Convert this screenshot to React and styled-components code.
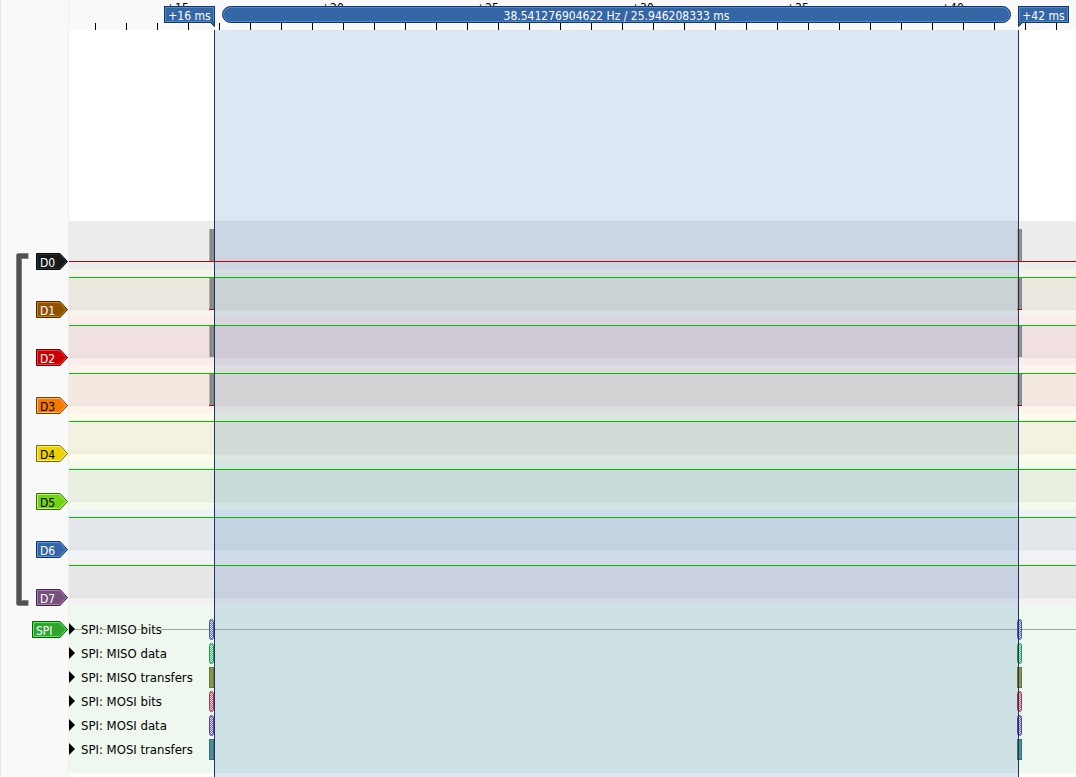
import React from "react";
import styled, { createGlobalStyle } from "styled-components";

const GlobalStyle = createGlobalStyle`
  *, *::before, *::after { box-sizing: border-box; }
  body {
    margin: 0;
    background: #ffffff;
    color: #000000;
    font-family: "DejaVu Sans Condensed", "DejaVu Sans", Tahoma, sans-serif;
    font-size: 12px;
    line-height: 16px;
  }
  button { font: inherit; color: inherit; margin: 0; padding: 0; border: 0; background: none; }
`;

const Page = styled.main`
  display: flex;
  min-height: 100vh;
  border-left: 1px solid #e4e4e4;
`;

const Gutter = styled.aside`
  display: flex;
  flex: none;
  width: 68px;
  padding-top: 253px;
  padding-left: 15px;
  background: #f9f9f9;
  border-right: 1px solid #eeeeee;
`;

const Bracket = styled.svg`
  display: block;
  flex: none;
`;

const Tags = styled.div`
  display: flex;
  flex: 1;
  flex-direction: column;
  align-items: flex-end;
  gap: 31px;
`;

const DecoderTagSlot = styled.div`
  display: flex;
  margin-top: -16px;
`;

const TagButton = styled.button`
  display: grid;
  color: ${(p) => p.$ink};
  text-align: left;
  & > * { grid-area: 1 / 1; }
`;

const TagText = styled.span`
  padding: 3px 0 0 4px;
  line-height: 14px;
`;

const View = styled.section`
  position: relative;
  display: flex;
  flex: 1;
  flex-direction: column;
  min-width: 0;
  overflow: hidden;
`;

const Ruler = styled.header`
  position: relative;
  flex: none;
  height: 30px;
  overflow: hidden;
  background: #f9f9f9;
`;

const Ticks = styled.div`
  height: 30px;
  padding: 23px 0 0 26px;
  display: flex;
  gap: 30px;
`;

const Tick = styled.i`
  flex: none;
  width: 1px;
  height: 7px;
  background: #000000;
`;

const Scale = styled.div`
  position: absolute;
  top: 0;
  left: 94px;
  display: flex;
`;

const ScaleLabel = styled.span`
  flex: none;
  width: 155px;
  padding-left: 3px;
`;

const Markers = styled.div`
  position: absolute;
  inset: 6px 7px auto 95px;
  display: flex;
  gap: 7px;
`;

const Flag = styled.div`
  position: relative;
  flex: none;
  width: 51px;
  height: 17px;
  padding-top: 1px;
  border: 1px solid #17375f;
  box-shadow: inset 0 0 0 1px #4a8ad8;
  background: #3465a4;
  color: #ffffff;
  text-align: center;
  line-height: 17px;
`;

const Tail = styled.svg`
  position: absolute;
  top: 14px;
  ${(p) => (p.$side === "right" ? "right: -1px;" : "left: -1px;")}
`;

const Interval = styled.div`
  flex: 1;
  min-width: 0;
  height: 17px;
  padding-top: 1px;
  border: 1px solid #17375f;
  border-radius: 9px;
  box-shadow: inset 0 0 0 1px #4a8ad8;
  background: #3465a4;
  color: #ffffff;
  text-align: center;
  white-space: nowrap;
  line-height: 17px;
`;

const Plot = styled.div`
  position: relative;
  flex: 1;
  padding-top: 191px;
`;

const Selection = styled.div`
  position: absolute;
  inset: 0 58px 0 146px;
  background: rgba(114, 159, 207, 0.25);
`;

const Traces = styled.div`
  position: relative;
`;

const Cursors = styled.div`
  position: absolute;
  inset: 0 57px 0 145px;
  border: solid #17375f;
  border-width: 0 1px;
  pointer-events: none;
`;

const Channel = styled.div`
  height: 48px;
  padding: 8px 0 7px;
  background: ${(p) => p.$tint}14;
`;

const Wave = styled.div`
  display: flex;
  height: 33px;
  justify-content: space-between;
  padding: 0 54px 0 140px;
  border: solid transparent;
  border-width: ${(p) => (p.$high ? "1px 0" : "0 0 1px")};
  ${(p) =>
    p.$high
      ? "background: rgba(0, 0, 0, 0.043); border-top-color: #00c000; border-bottom-color: rgba(0, 0, 0, 0.03);"
      : "border-bottom-color: #c00000;"}
`;

const Burst = styled.i`
  width: 5px;
  height: ${(p) => (p.$floor ? "32px" : "100%")};
  background: linear-gradient(90deg, #b4b4b2 0 1px, #858585 1px 3px, #959595 3px 4px, #858585 4px);
  border-bottom: ${(p) => (p.$floor ? "1px solid #c00000" : "0")};
`;

const Decoder = styled.div`
  padding: 12px 0;
  background: rgba(47, 165, 47, 0.08);
`;

const DecoderRow = styled.div`
  display: flex;
  align-items: center;
  height: 24px;
  padding-right: 54px;
  background: ${(p) => (p.$axis ? "linear-gradient(#9aa89c, #9aa89c) 0 12px / 100% 1px no-repeat" : "none")};
`;

const RowToggle = styled.button`
  display: flex;
  align-items: center;
  gap: 6px;
  width: 140px;
  font-size: 13px;
  line-height: 18px;
  text-align: left;
  white-space: nowrap;
  text-shadow: 1px 0 #edf7ee, -1px 0 #edf7ee, 0 1px #edf7ee, 0 -1px #edf7ee;
`;

const RowName = styled.span`
  padding-top: 2px;
`;

const Spacer = styled.span`
  flex: 1;
`;

const Annotation = styled.i`
  width: 5px;
  height: 21px;
  border: 1px solid ${(p) => p.$edge};
  border-radius: ${(p) => (p.$square ? "0" : "3px")};
  background: ${(p) =>
    p.$square
      ? p.$tint
      : `repeating-conic-gradient(${p.$tint} 0 25%, color-mix(in srgb, ${p.$tint} 25%, white) 0 50%) 0 0 / 2px 2px`};
`;

const channels = [
  { name: "D0", ink: "#fff", color: "#16191a", light: "#2e3436", edge: "#060808", burst: true },
  { name: "D1", ink: "#fff", color: "#8f5202", light: "#dc7e03", edge: "#472901", tint: "#8f6c02", high: true, burst: true, floor: true },
  { name: "D2", ink: "#fff", color: "#cc0000", light: "#ff3838", edge: "#660000", high: true, burst: true },
  { name: "D3", ink: "#000", color: "#f57900", light: "#ffb568", edge: "#7a3c00", high: true, burst: true, floor: true },
  { name: "D4", ink: "#000", color: "#edd400", light: "#fff06a", edge: "#766a00", high: true },
  { name: "D5", ink: "#000", color: "#73d216", light: "#abff5b", edge: "#39690b", high: true },
  { name: "D6", ink: "#fff", color: "#3465a4", light: "#4f9bfc", edge: "#1a3252", high: true },
  { name: "D7", ink: "#fff", color: "#75507b", light: "#b37bbd", edge: "#3a283d", high: true },
];

const decoderRows = [
  { name: "SPI: MISO bits", edge: "#4a5c9c", tint: "#5f78d0" },
  { name: "SPI: MISO data", edge: "#2f9055", tint: "#3fc074" },
  { name: "SPI: MISO transfers", edge: "#6c7838", tint: "#8a9550", square: true },
  { name: "SPI: MOSI bits", edge: "#a03a54", tint: "#e0506f" },
  { name: "SPI: MOSI data", edge: "#55459a", tint: "#7960d4" },
  { name: "SPI: MOSI transfers", edge: "#38707a", tint: "#528c96", square: true },
];

const scale = ["+15", "+20", "+25", "+30", "+35", "+40"];

function Tag({ name, width = 32, ink, color, light, edge }) {
  const w = width;
  return (
    <TagButton type="button" $ink={ink}>
      <svg width={w} height="17" viewBox={`0 0 ${w} 17`} aria-hidden="true">
        <path d={`M.5 .5H${w - 8}L${w - 0.5} 8.5L${w - 8} 16.5H.5Z`} fill={color} stroke={edge} />
        <path d={`M1.5 1.5H${w - 8.5}L${w - 2} 8.5L${w - 8.5} 15.5H1.5Z`} fill="none" stroke={light} />
      </svg>
      <TagText>{name}</TagText>
    </TagButton>
  );
}

function GroupBracket() {
  return (
    <Bracket width="13" height="353" viewBox="0 0 13 353" aria-hidden="true">
      <path d="M12.5 3H3V350H12.5" fill="none" stroke="#80827e" strokeWidth="6" strokeLinejoin="round" />
      <path d="M12 3H3V350H12" fill="none" stroke="#50524f" strokeWidth="4" />
    </Bracket>
  );
}

function TimeFlag({ side, children }) {
  return (
    <Flag>
      {children}
      <Tail $side={side} width="6" height="7" viewBox="0 0 6 7" aria-hidden="true">
        {side === "right" ? (
          <>
            <path d="M1 0H5V6L2 2Z" fill="#3465a4" />
            <path d="M2 2L5.5 5.5V0" fill="none" stroke="#17375f" />
          </>
        ) : (
          <>
            <path d="M5 0H1V6L4 2Z" fill="#3465a4" />
            <path d="M4 2L.5 5.5V0" fill="none" stroke="#17375f" />
          </>
        )}
      </Tail>
    </Flag>
  );
}

export default function App() {
  return (
    <>
      <GlobalStyle />
      <Page>
        <Gutter>
          <GroupBracket />
          <Tags>
            {channels.map((c) => (
              <Tag key={c.name} {...c} />
            ))}
            <DecoderTagSlot>
              <Tag name="SPI" width={36} ink="#fff" color="#2fa52f" light="#48fd48" edge="#175217" />
            </DecoderTagSlot>
          </Tags>
        </Gutter>
        <View>
          <Ruler>
            <Ticks>
              {Array.from({ length: 100 }, (_, i) => (
                <Tick key={i} />
              ))}
            </Ticks>
            <Scale>
              {scale.map((s) => (
                <ScaleLabel key={s}>{s}</ScaleLabel>
              ))}
            </Scale>
            <Markers>
              <TimeFlag side="right">+16 ms</TimeFlag>
              <Interval>38.541276904622 Hz / 25.946208333 ms</Interval>
              <TimeFlag side="left">+42 ms</TimeFlag>
            </Markers>
          </Ruler>
          <Plot>
            <Selection />
            <Traces>
              {channels.map((c) => (
                <Channel key={c.name} $tint={c.tint || c.color}>
                  <Wave $high={c.high}>
                    {c.burst && <Burst $floor={c.floor} />}
                    {c.burst && <Burst $floor={c.floor} />}
                  </Wave>
                </Channel>
              ))}
              <Decoder>
                {decoderRows.map((r, i) => (
                  <DecoderRow key={r.name} $axis={i === 0}>
                    <RowToggle type="button" aria-expanded="false">
                      <svg width="6" height="12" viewBox="0 0 6 12" aria-hidden="true">
                        <path d="M0 0L6 6L0 12Z" />
                      </svg>
                      <RowName>{r.name}</RowName>
                    </RowToggle>
                    <Annotation $edge={r.edge} $tint={r.tint} $square={r.square} />
                    <Spacer />
                    <Annotation $edge={r.edge} $tint={r.tint} $square={r.square} />
                  </DecoderRow>
                ))}
              </Decoder>
            </Traces>
            <Cursors />
          </Plot>
        </View>
      </Page>
    </>
  );
}
